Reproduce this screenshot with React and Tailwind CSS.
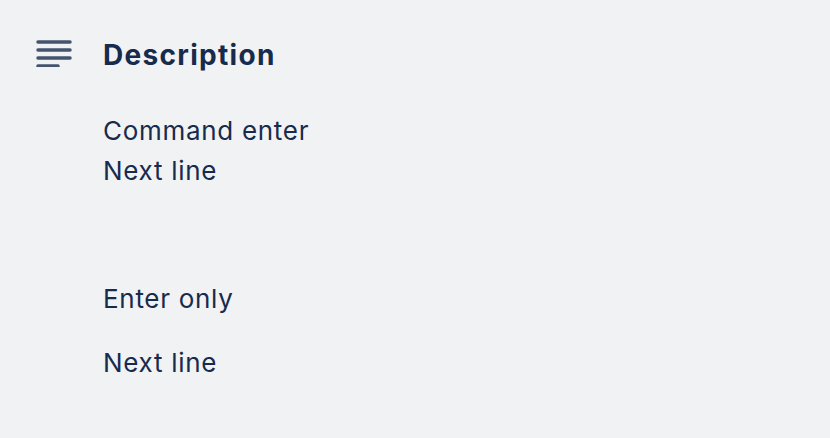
import React from "react";

function DescriptionIcon() {
  return (
    <svg width="36" height="28" viewBox="0 0 36 28" fill="none" className="-mt-[4px]">
      <g stroke="#44546f" strokeWidth="3.5" strokeLinecap="round">
        <line x1="2" y1="3" x2="34" y2="3" />
        <line x1="2" y1="11" x2="34" y2="11" />
        <line x1="2" y1="19" x2="34" y2="19" />
        <line x1="2" y1="27" x2="22" y2="27" />
      </g>
    </svg>
  );
}

export default function App() {
  return (
    <div className="min-h-screen w-full bg-[#f1f2f4] text-[#172b4d] font-['Inter',sans-serif]">
      <div className="flex items-center pt-[37px] pl-[36px]">
        <DescriptionIcon />
        <h3 className="ml-[31px] text-[28px] font-bold leading-[36px] tracking-[1.3px]">Description</h3>
      </div>
      <div className="pl-[103px] pt-[38px] text-[26px] leading-[40px] tracking-[0.7px] space-y-[24px]">
        <p>
          Command enter
          <br />
          Next line
        </p>
        <p>
          <br />
        </p>
        <p>Enter only</p>
        <p>Next line</p>
      </div>
    </div>
  );
}
